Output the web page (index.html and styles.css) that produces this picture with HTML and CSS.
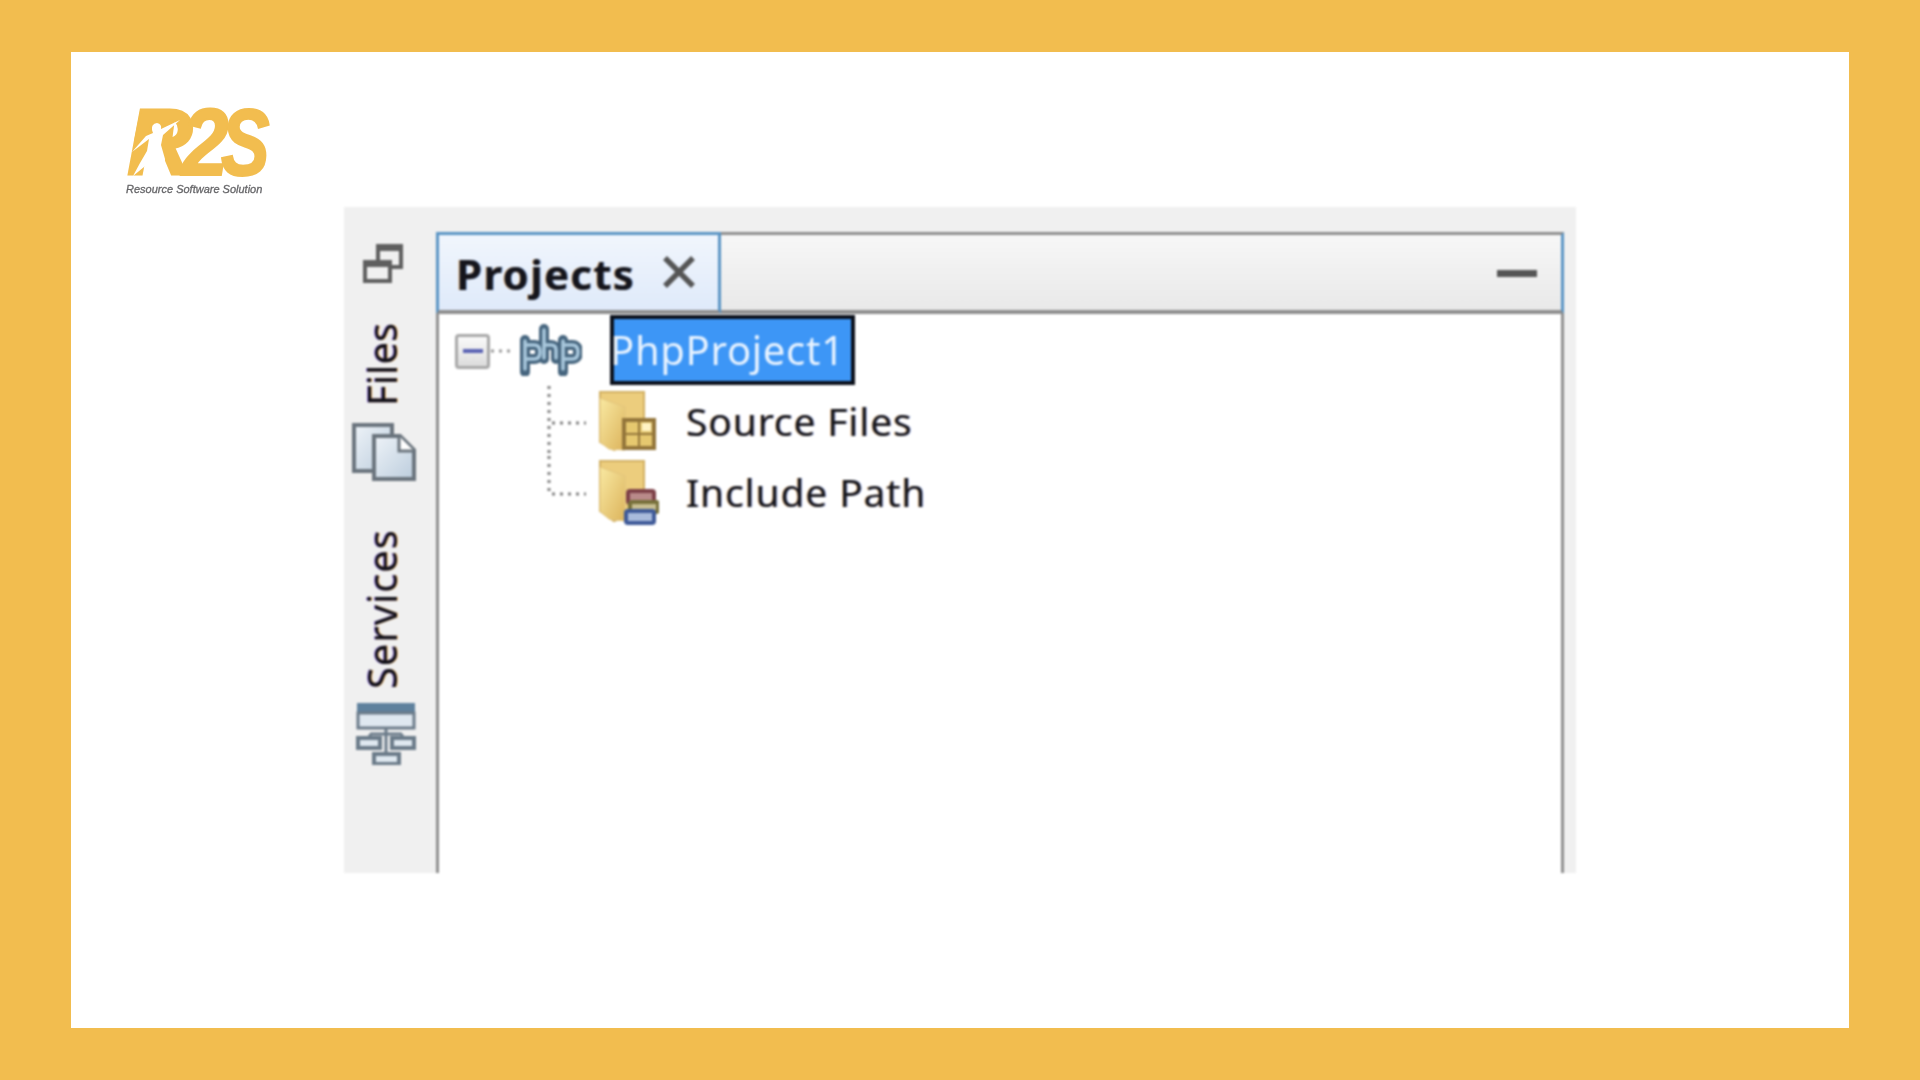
FILE: index.html
```html
<!DOCTYPE html>
<html lang="en">
<head>
<meta charset="utf-8">
<title>Projects</title>
<link rel="stylesheet" href="styles.css">
</head>
<body>
<main class="card">
  <header class="logo">
    <svg class="logo-mark" width="150" height="72" viewBox="0 0 150 72">
      <path d="M14 4 L50 4 L46 34 L8 34Z" fill="#f2bd4f"/>
      <text class="logo-letters" transform="translate(1 68) scale(1 1.03)">R</text>
      <text class="logo-letters" transform="translate(56 68) scale(.92 1.03)">2</text>
      <text class="logo-letters" transform="translate(95 68) scale(.8 1.03)">S</text>
      <path d="M54 13 L37 28 L35 38 L39 52 L38 69 L32 69 L27 50 L18 60 L7 69 L14 56 L21 44 L23 32 L6 45 L20 29 L27 26 L26 23 Q25 17 31 16 Q36 17 35 22Z" fill="#fff"/>
    </svg>
    <div class="logo-tag">Resource Software Solution</div>
  </header>
  <section class="shot">
    <aside class="side">
      <svg class="ic-restore" width="40" height="40" viewBox="0 0 40 40"><path d="M15 3h23v21H28" fill="none" stroke="#5f5f5f" stroke-width="4"/><path d="M15 1v16" stroke="#5f5f5f" stroke-width="4"/><path d="M14 5h25" stroke="#5f5f5f" stroke-width="6"/><path d="M2 19h25v19H2z" fill="#f0f0f0" stroke="#5f5f5f" stroke-width="4"/><path d="M1 21h27" stroke="#5f5f5f" stroke-width="6"/></svg>
      <span class="vtext v-files">Files</span>
      <svg class="ic-files" width="64" height="58" viewBox="0 0 64 58"><defs><linearGradient id="pg" x1="0" y1="0" x2="1" y2="1"><stop offset="0" stop-color="#eef3f8"/><stop offset="1" stop-color="#bccddd"/></linearGradient></defs><path d="M2 2h38v46H2z" fill="url(#pg)" stroke="#6a747d" stroke-width="4"/><path d="M22 13h26l14 14v29H22z" fill="url(#pg)" stroke="#6a747d" stroke-width="4"/><path d="M47 13v15h15" fill="#fff" stroke="#6a747d" stroke-width="3"/></svg>
      <span class="vtext v-services">Services</span>
      <svg class="ic-services" width="60" height="62" viewBox="0 0 60 62"><rect x="1" y="0" width="58" height="10" fill="#5f819d"/><rect x="2" y="10" width="56" height="15" fill="#dfe8f0" stroke="#6b7b89" stroke-width="3"/><path d="M30 25v26M14 31v4M46 31v4M14 31h32" stroke="#6b7b89" stroke-width="3" fill="none"/><rect x="2" y="35" width="22" height="10" fill="#dfe8f0" stroke="#6b7b89" stroke-width="4"/><rect x="36" y="35" width="22" height="10" fill="#dfe8f0" stroke="#6b7b89" stroke-width="4"/><rect x="18" y="51" width="25" height="10" fill="#dfe8f0" stroke="#6b7b89" stroke-width="4"/></svg>
    </aside>
    <div class="pane">
      <div class="tabbar">
        <div class="tab">
          <span class="tab-title">Projects</span>
          <svg class="ic-close" width="34" height="32" viewBox="0 0 34 32"><path d="M3 2 31 30M31 2 3 30" stroke="#555" stroke-width="5.5"/></svg>
        </div>
        <div class="tab-rest"><span class="minimize"></span></div>
      </div>
      <div class="tree">
        <div class="row row-root">
          <span class="expander"><span class="minus"></span></span>
          <svg class="dots-h" width="28" height="6" viewBox="0 0 28 6"><path d="M1 3h20" stroke="#999" stroke-width="3" stroke-dasharray="3 5"/></svg>
          <svg class="ic-php" width="64" height="52" viewBox="0 0 64 52"><g fill="none" stroke-linecap="round"><g stroke="#46657e" stroke-width="10"><path d="M7 16v32M7 21h9q6 0 6 7t-6 7H7"/><path d="M26 5v30M26 21h7q5 0 5 5v9"/><path d="M45 16v32M45 21h9q6 0 6 7t-6 7h-9"/></g><g stroke="#a9c8dd" stroke-width="3.5"><path d="M7 17v28M7 21h9q6 0 6 7t-6 7H7"/><path d="M26 6v28M26 21h7q5 0 5 5v8"/><path d="M45 17v28M45 21h9q6 0 6 7t-6 7h-9"/></g></g></svg>
          <span class="selected">PhpProject1</span>
        </div>
        <div class="row row-child">
          <svg class="connector" width="40" height="71" viewBox="0 0 40 71"><path d="M3 1v70M6 38h34" stroke="#808080" stroke-width="3" stroke-dasharray="3 5" fill="none"/></svg>
          <svg class="ic-folder" width="60" height="62" viewBox="0 0 60 62"><defs><linearGradient id="fg" x1="0" y1="0" x2="1" y2="1"><stop offset="0" stop-color="#f9e9a2"/><stop offset="1" stop-color="#dcb45c"/></linearGradient></defs><path d="M1 2h44v48l-30 10L1 52z" fill="#eccd7d" stroke="#d2b063" stroke-width="2"/><path d="M1 8l25 9v43L10 59 1 52z" fill="url(#fg)" stroke="#e3c57c"/><rect x="25" y="30" width="30" height="28" fill="#e6c86f" stroke="#93753a" stroke-width="4"/><path d="M40 30v28M25 44h30" stroke="#93753a" stroke-width="2"/><rect x="43" y="33" width="9" height="8" fill="#fff3c4"/></svg>
          <span class="label">Source Files</span>
        </div>
        <div class="row row-child">
          <svg class="connector" width="40" height="71" viewBox="0 0 40 71"><path d="M3 0v35M6 38h34" stroke="#808080" stroke-width="3" stroke-dasharray="3 5" fill="none"/></svg>
          <svg class="ic-folder" width="60" height="66" viewBox="0 0 60 66"><path d="M1 2h44v48l-30 12L1 52z" fill="#eccd7d" stroke="#d2b063" stroke-width="2"/><path d="M1 8l25 9v45L10 60 1 52z" fill="url(#fg)" stroke="#e3c57c"/><rect x="29" y="32" width="26" height="12" rx="2" fill="#b98a8a" stroke="#7d4048" stroke-width="4"/><rect x="31" y="43" width="28" height="10" rx="2" fill="#c7bd90" stroke="#77703a" stroke-width="4"/><rect x="27" y="52" width="28" height="12" rx="2" fill="#a9bbdc" stroke="#3f5a98" stroke-width="4"/></svg>
          <span class="label">Include Path</span>
        </div>
      </div>
    </div>
  </section>
</main>
</body>
</html>
```
FILE: styles.css
```css
* { box-sizing: border-box; }
html, body { margin: 0; height: 100%; }
body {
  background: #f2bd4f;
  padding: 52px 71px;
  height: 1080px;
  overflow: hidden;
}
.card {
  background: #fff;
  height: 976px;
  padding-top: 55px;
}
.logo {
  margin-left: 55px;
  height: 100px;
  filter: blur(.5px);
}
.logo-mark { display: block; overflow: visible; }
.logo-letters {
  font: italic 700 91px "Liberation Sans", sans-serif;
  fill: #f2bd4f;
  stroke: #f2bd4f;
  stroke-width: 2px;
}
.logo-tag {
  font: italic 500 11px "Liberation Sans", sans-serif;
  color: #666669;
  margin-top: 4px;
  width: 150px;
  white-space: nowrap;
  -webkit-text-stroke: .3px #666669;
}
.shot {
  margin-left: 273px;
  width: 1232px;
  height: 666px;
  background: #f0f0f0;
  display: flex;
  filter: blur(.9px);
}
.side {
  width: 92px;
  flex: none;
  display: flex;
  flex-direction: column;
  align-items: flex-start;
  padding-top: 36px;
}
.ic-restore { margin-left: 19px; flex: none; }
.ic-files { margin: 17px 0 0 8px; flex: none; }
.ic-services { margin: 14px 0 0 12px; flex: none; }
.vtext {
  writing-mode: vertical-rl;
  transform: rotate(180deg);
  font: 400 40px/44px "Noto Sans", sans-serif;
  color: #101018;
  margin-left: 16px;
  text-shadow: 0 1px 0 rgba(255, 150, 0, .5), 0 -1px 0 rgba(60, 0, 200, .5);
  white-space: nowrap;
}
.v-files { margin-top: 39px; height: 84px; }
.v-services { margin-top: 38px; height: 170px; letter-spacing: .9px; }
.pane {
  width: 1128px;
  flex: none;
  display: flex;
  flex-direction: column;
  margin-top: 25px;
  border-left: 3px solid #8e8e8e;
  border-right: 3px solid #8e8e8e;
}
.tabbar {
  display: flex;
  height: 82px;
  margin-left: -3px;
  margin-right: -3px;
  flex: none;
}
.tab {
  width: 285px;
  flex: none;
  display: flex;
  align-items: center;
  padding: 0 0 0 17px;
  background: linear-gradient(#f1f6fd, #dfeafa);
  border: 3px solid #5a94c4;
  border-bottom: 4px solid #8e8e8e;
}
.tab-title {
  font: 700 42px "Noto Sans", sans-serif;
  letter-spacing: 1.3px;
  color: #15151c;
  width: 206px;
  padding-top: 2px;
  text-shadow: 1px 0 0 rgba(0, 90, 220, .4), -1px 0 0 rgba(255, 140, 0, .45);
}
.ic-close { flex: none; margin-top: -2px; }
.tab-rest {
  flex: 1;
  display: flex;
  align-items: center;
  justify-content: flex-end;
  padding-right: 24px;
  background: linear-gradient(#f7f7f7, #e9e9e9);
  border-top: 3px solid #8e8e8e;
  border-bottom: 4px solid #8e8e8e;
  border-right: 3px solid #5a94c4;
}
.minimize { width: 40px; height: 7px; background: #555; margin-top: 1px; }
.tree {
  flex: 1;
  background: #fff;
  padding-top: 1px;
}
.row { display: flex; align-items: center; }
.row-root { height: 70px; padding-left: 16px; }
.row-child { height: 71px; padding-left: 107px; }
.expander {
  width: 35px;
  height: 35px;
  flex: none;
  border: 3px solid #a8a8a8;
  border-radius: 4px;
  background: linear-gradient(#fafafa, #dcdcdc);
  display: flex;
  align-items: center;
  justify-content: center;
  margin-top: 2px;
}
.minus { width: 20px; height: 4px; background: #5b63b4; }
.dots-h { flex: none; margin-top: 2px; }
.ic-php { flex: none; }
.selected {
  margin-left: 28px;
  width: 245px;
  height: 70px;
  flex: none;
  border: 4px solid #0a0f1a;
  background: #3d96f6;
  color: #e8f3ff;
  font: 400 40px/62px "Noto Sans", sans-serif;
  letter-spacing: .7px;
  white-space: nowrap;
  text-indent: -4px;
}
.connector { flex: none; }
.ic-folder { flex: none; margin-left: 13px; }
.label {
  margin-left: 27px;
  font: 400 39px "Noto Sans", sans-serif;
  letter-spacing: .85px;
  color: #16161c;
  white-space: nowrap;
  text-shadow: 1px 0 0 rgba(0, 60, 220, .35), -1px 0 0 rgba(255, 140, 0, .4);
}
```
